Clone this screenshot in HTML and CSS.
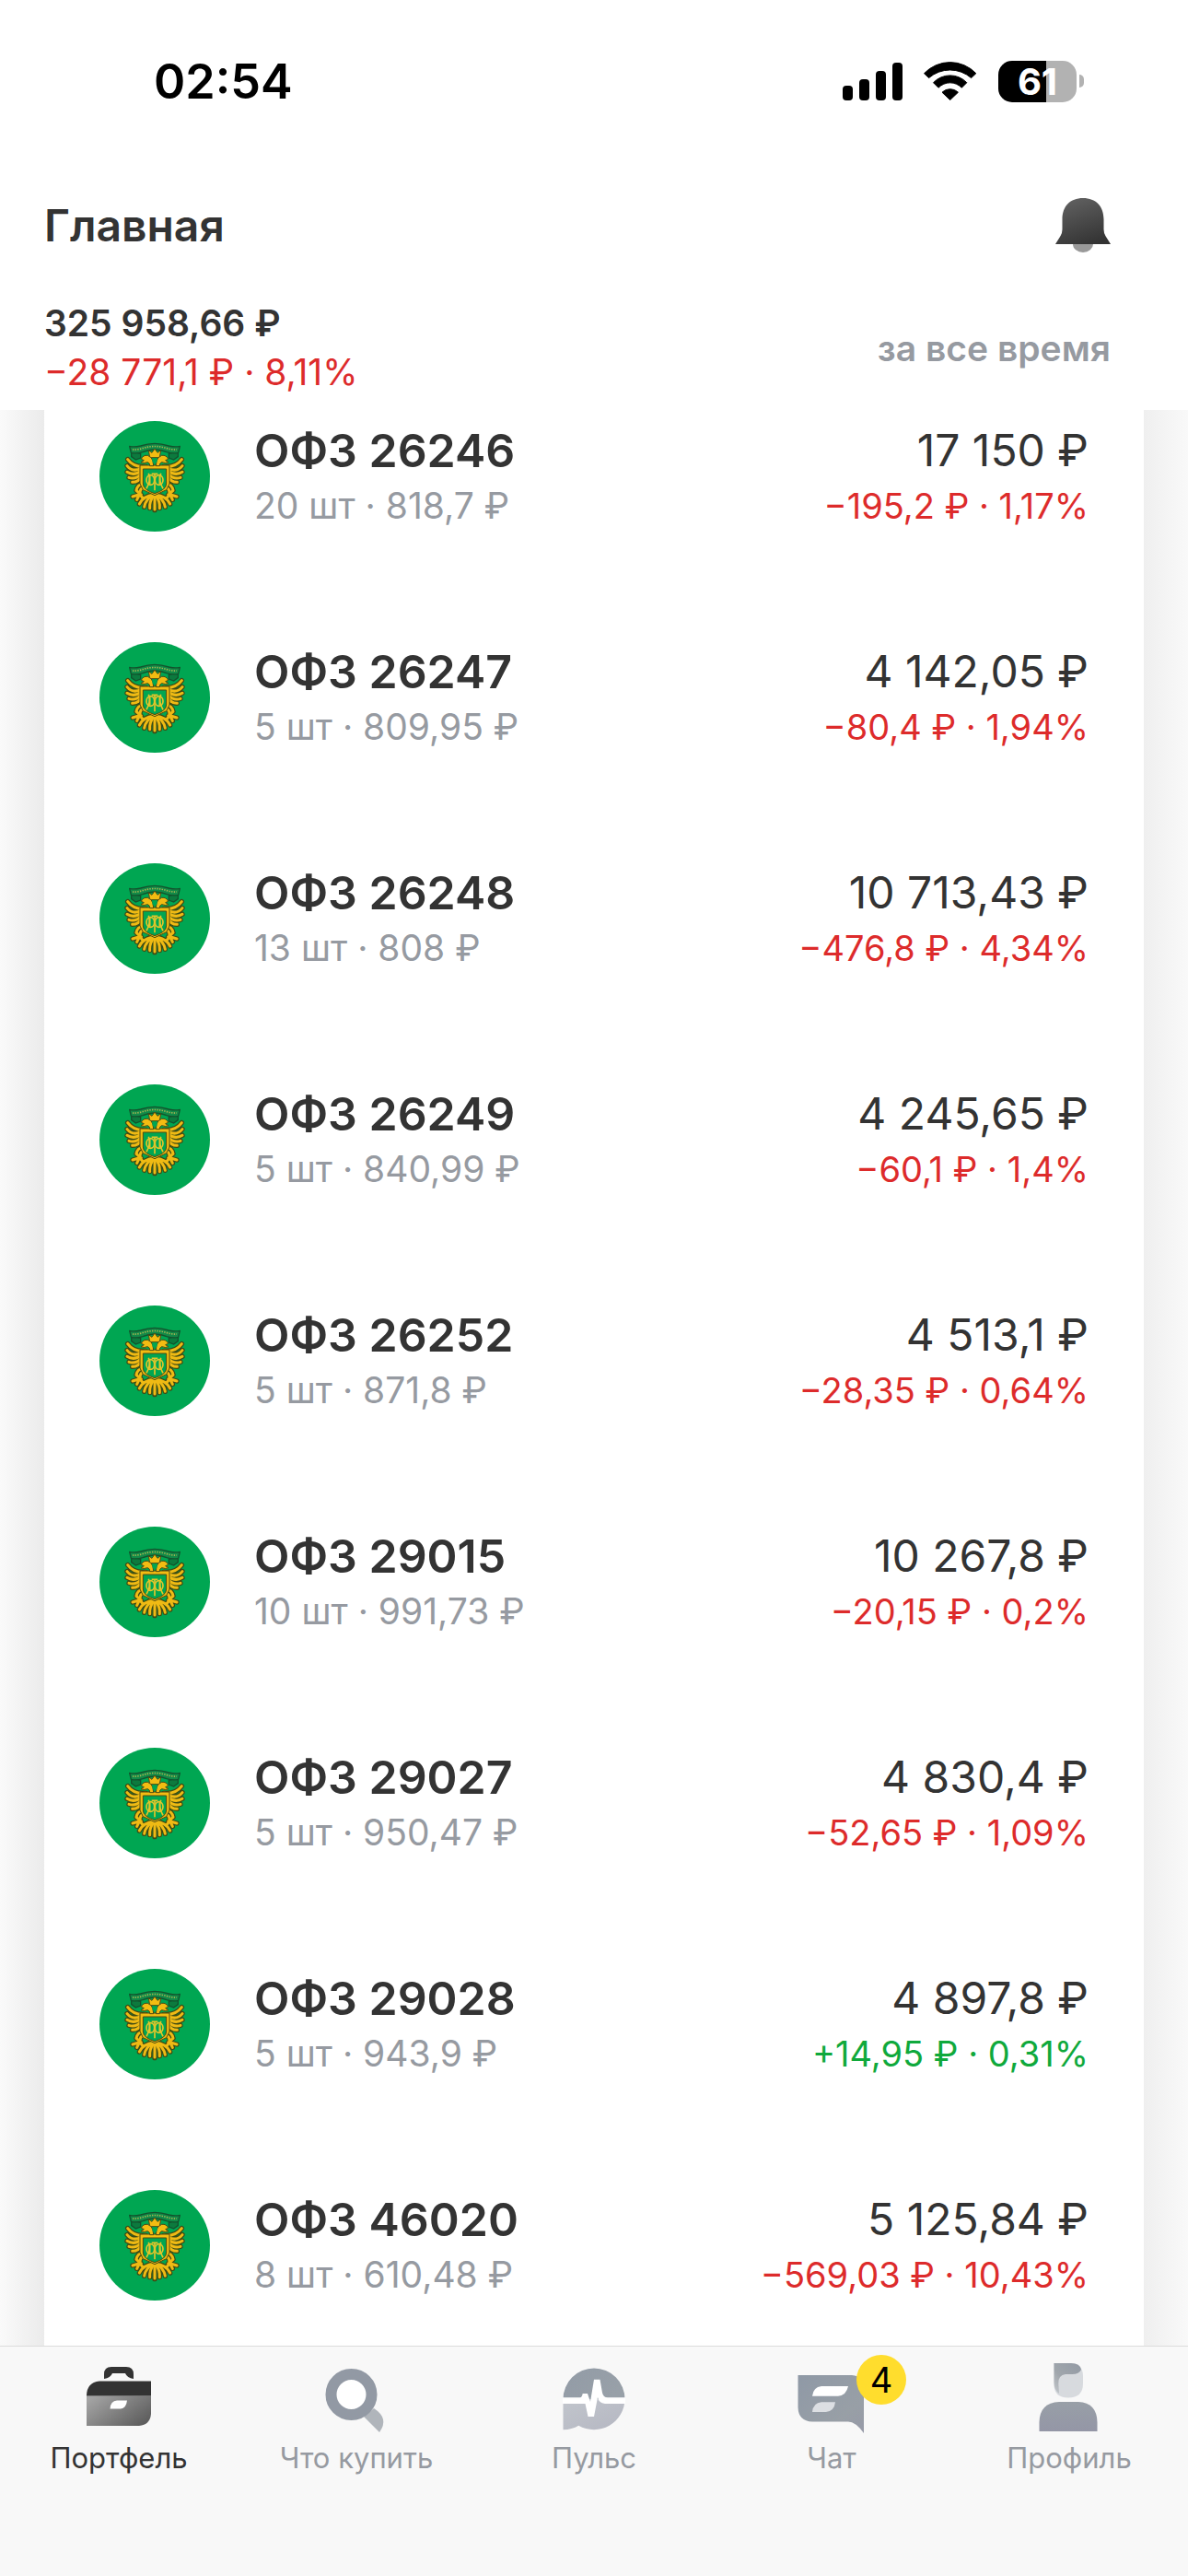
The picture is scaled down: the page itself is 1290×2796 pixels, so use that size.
FILE: index.html
```html
<!DOCTYPE html>
<html lang="ru">
<head>
<meta charset="utf-8">
<meta name="viewport" content="width=device-width, initial-scale=1">
<title>Портфель</title>
<link rel="stylesheet" href="styles.css">
</head>
<body>
<svg class="defs" width="0" height="0" aria-hidden="true">
  <defs>
    <path id="wing" d="M150 148Q112 152 92 125M136 154Q108 168 90 146M138 162Q112 180 90 166M138 170Q118 192 96 184M140 178Q126 200 107 199"/>
    <path id="leg" d="M140 206Q124 206 120 226M142 218Q132 218 132 236M120 226L136 240M128 240L108 246M130 240L122 256M132 240L142 252"/>
    <path id="tail" d="M178 240Q142 244 130 270M178 240Q150 254 146 280M178 242Q162 260 164 284"/>
    <g id="half-eagle">
      <use href="#wing"/><use href="#leg"/><use href="#tail"/>
    </g>
  </defs>
  <symbol id="emblem" viewBox="0 0 360 360">
    <circle cx="180" cy="180" r="180" fill="#00a652"/>
    <path d="M104 98v18l14 10 16-6v-14zM256 98v18l-14 10-16-6v-14z" fill="#0c7a3e" stroke="#12532d" stroke-width="4"/>
    <path d="M98 82q14 4 36-1 24-8 46-8t46 8q22 5 36 1l-5 21q-18 4-38-2-18-8-39-8t-39 8q-20 6-38 2z" fill="#128a48" stroke="#12532d" stroke-width="4" stroke-linejoin="round"/>
    <path d="M108 93q16 1 32-4 40-13 80 0 16 5 32 4" fill="none" stroke="#a9b552" stroke-width="5" stroke-dasharray="4 4"/>
    <g fill="none" stroke-linecap="round">
      <g stroke="#3d4a14" stroke-width="16">
        <use href="#half-eagle"/><use href="#half-eagle" transform="matrix(-1 0 0 1 360 0)"/><path d="M180 242V290"/>
      </g>
      <g stroke="#efba14" stroke-width="9">
        <use href="#half-eagle"/><use href="#half-eagle" transform="matrix(-1 0 0 1 360 0)"/><path d="M180 242V288"/>
      </g>
    </g>
    <g fill="#f3bc12" stroke="#4d4b12" stroke-width="3" stroke-linejoin="round">
      <path d="M132 144h96v60l-10 20-38 18-38-18-10-20z"/>
      <path d="M164 119l-4-24 11 8 9-13 9 13 11-8-4 24z"/>
      <path d="M164 146q2-8-7-12-12 5-22 0l10-6-9-4q6-14 21-12 14 5 17 18l2 16zM196 146q-2-8 7-12 12 5 22 0l-10-6 9-4q-6-14-21-12-14 5-17 18l-2 16z"/>
    </g>
    <path d="M172 122h16v10l-8 10-8-10z" fill="#00a652"/>
    <path d="M142 156h76v48q0 20-38 32-38-12-38-32z" fill="#00a652" stroke="#4d4b12" stroke-width="3"/>
    <g fill="none" stroke="#e3c52a" stroke-width="5">
      <ellipse cx="166" cy="192" rx="13" ry="16"/><ellipse cx="194" cy="192" rx="13" ry="16"/>
      <path d="M180 170v56M160 170q8 24-7 50M200 170q-8 24 7 50M164 178v28M196 178v28M170 172h20"/>
    </g>
  </symbol>
</svg>

<div class="app">
  <header class="header">
    <div class="status">
      <span class="status-time">02:54</span>
      <div class="status-icons">
        <svg width="65" height="41" viewBox="0 0 65 41" aria-hidden="true">
          <rect y="25" width="11" height="16" rx="4"/><rect x="18" y="18" width="11" height="23" rx="4"/><rect x="36" y="9" width="11" height="32" rx="4"/><rect x="54" width="11" height="41" rx="4"/>
        </svg>
        <svg width="58" height="42" viewBox="0 0 58 42" aria-hidden="true">
          <g stroke="#000" stroke-width="1" stroke-linejoin="round">
            <path d="M.5 12.7A38.8 38.8 0 0 1 56.8 12.7L51.6 17.6A35 35 0 0 0 5.6 17.6Z"/>
            <path d="M10.5 22.7A25 25 0 0 1 46.8 22.7L41.3 28.2A17.6 17.6 0 0 0 16 28.2Z"/>
            <path d="M20 33.2A12.5 12.5 0 0 1 37.4 33.2L28.7 41.5Z"/>
          </g>
        </svg>
        <div class="battery">
          <span class="battery-body">61</span>
          <span class="battery-nub"></span>
        </div>
      </div>
    </div>
    <div class="title-row">
      <h1 class="title">Главная</h1>
      <button class="bell" type="button" aria-label="Уведомления">
        <svg width="60" height="60" viewBox="0 0 60 60" aria-hidden="true">
          <defs><linearGradient id="bell-fill" x1=".3" y1="0" x2=".7" y2="1"><stop offset="0" stop-color="#606060"/><stop offset="1" stop-color="#333"/></linearGradient></defs>
          <path d="M19 50h22v1a11 9 0 0 1-22 0z" fill="#999"/>
          <path d="M0 51L5 43Q7.500 39 7.500 35V24C7.500 10 16 1 30 1S52.500 10 52.500 24V35Q52.500 39 55 43L60 51Z" fill="url(#bell-fill)"/>
        </svg>
      </button>
    </div>
    <div class="summary">
      <div>
        <div class="total">325 958,66 ₽</div>
        <div class="total-change">−28 771,1 ₽ · 8,11%</div>
      </div>
      <button class="period" type="button">за все время</button>
    </div>
  </header>

  <main class="content">
    <ul class="list">
      <li><a class="row" href="#26246"><svg class="logo" aria-hidden="true"><use href="#emblem"/></svg><span class="cell"><span class="name">ОФЗ 26246</span><span class="lot">20 шт · 818,7 ₽</span></span><span class="cell cell-end"><span class="value">17 150 ₽</span><span class="change">−195,2 ₽ · 1,17%</span></span></a></li>
      <li><a class="row" href="#26247"><svg class="logo" aria-hidden="true"><use href="#emblem"/></svg><span class="cell"><span class="name">ОФЗ 26247</span><span class="lot">5 шт · 809,95 ₽</span></span><span class="cell cell-end"><span class="value">4 142,05 ₽</span><span class="change">−80,4 ₽ · 1,94%</span></span></a></li>
      <li><a class="row" href="#26248"><svg class="logo" aria-hidden="true"><use href="#emblem"/></svg><span class="cell"><span class="name">ОФЗ 26248</span><span class="lot">13 шт · 808 ₽</span></span><span class="cell cell-end"><span class="value">10 713,43 ₽</span><span class="change">−476,8 ₽ · 4,34%</span></span></a></li>
      <li><a class="row" href="#26249"><svg class="logo" aria-hidden="true"><use href="#emblem"/></svg><span class="cell"><span class="name">ОФЗ 26249</span><span class="lot">5 шт · 840,99 ₽</span></span><span class="cell cell-end"><span class="value">4 245,65 ₽</span><span class="change">−60,1 ₽ · 1,4%</span></span></a></li>
      <li><a class="row" href="#26252"><svg class="logo" aria-hidden="true"><use href="#emblem"/></svg><span class="cell"><span class="name">ОФЗ 26252</span><span class="lot">5 шт · 871,8 ₽</span></span><span class="cell cell-end"><span class="value">4 513,1 ₽</span><span class="change">−28,35 ₽ · 0,64%</span></span></a></li>
      <li><a class="row" href="#29015"><svg class="logo" aria-hidden="true"><use href="#emblem"/></svg><span class="cell"><span class="name">ОФЗ 29015</span><span class="lot">10 шт · 991,73 ₽</span></span><span class="cell cell-end"><span class="value">10 267,8 ₽</span><span class="change">−20,15 ₽ · 0,2%</span></span></a></li>
      <li><a class="row" href="#29027"><svg class="logo" aria-hidden="true"><use href="#emblem"/></svg><span class="cell"><span class="name">ОФЗ 29027</span><span class="lot">5 шт · 950,47 ₽</span></span><span class="cell cell-end"><span class="value">4 830,4 ₽</span><span class="change">−52,65 ₽ · 1,09%</span></span></a></li>
      <li><a class="row" href="#29028"><svg class="logo" aria-hidden="true"><use href="#emblem"/></svg><span class="cell"><span class="name">ОФЗ 29028</span><span class="lot">5 шт · 943,9 ₽</span></span><span class="cell cell-end"><span class="value">4 897,8 ₽</span><span class="change change-up">+14,95 ₽ · 0,31%</span></span></a></li>
      <li><a class="row" href="#46020"><svg class="logo" aria-hidden="true"><use href="#emblem"/></svg><span class="cell"><span class="name">ОФЗ 46020</span><span class="lot">8 шт · 610,48 ₽</span></span><span class="cell cell-end"><span class="value">5 125,84 ₽</span><span class="change">−569,03 ₽ · 10,43%</span></span></a></li>
    </ul>
  </main>

  <nav class="tabs">
    <a class="tab tab-active" href="#portfolio">
      <svg class="tab-icon" viewBox="0 0 84 84" aria-hidden="true">
        <defs><linearGradient id="case-fill" x1="0" y1=".2" x2="1" y2=".8"><stop offset="0" stop-color="#a3a3a3"/><stop offset="1" stop-color="#5c5c5c"/></linearGradient></defs>
        <path d="M26 21V16Q26 8 34 8H50Q58 8 58 16V21Q51 20 49 15H35Q33 20 26 21Z" fill="#333"/>
        <path d="M7 39.500H77V59Q76 71 64 72H7Z" fill="url(#case-fill)"/>
        <path d="M7 39.500Q7 25 21 23.500H77V39.500Z" fill="#333"/>
        <path d="M32.500 53.500Q33 45 40 44.500H51Q50 53 44 53.500Z" fill="#fff"/>
      </svg>
      <span>Портфель</span>
    </a>
    <a class="tab" href="#buy">
      <svg class="tab-icon" viewBox="0 0 84 84" aria-hidden="true">
        <path d="M50 62L67 79Q78 64 61 53Z" fill="#b0b5bb"/>
        <circle cx="36.500" cy="38" r="22" fill="#fff" stroke="#9299a4" stroke-width="12"/>
      </svg>
      <span>Что купить</span>
    </a>
    <a class="tab" href="#pulse">
      <svg class="tab-icon" viewBox="0 0 84 84" aria-hidden="true">
        <defs>
          <linearGradient id="pulse-top" x1="0" y1="0" x2="1" y2=".5"><stop offset="0" stop-color="#929ba6"/><stop offset="1" stop-color="#98a0a8"/></linearGradient>
          <linearGradient id="pulse-low" x1="0" y1="0" x2="1" y2="1"><stop offset="0" stop-color="#c1c5cc"/><stop offset="1" stop-color="#b5b7c2"/></linearGradient>
        </defs>
        <path d="M8.500 43A33.500 33.500 0 0 1 75.500 43Z" fill="url(#pulse-top)"/>
        <path d="M8.500 43H75.500A33.500 33.500 0 0 1 25.300 71.700Q18 76 8.500 76.300Z" fill="url(#pulse-low)"/>
        <path d="M8 41.300H27Q29 41 29.700 37H35L38 46 42 21.700H48.500L51 36Q52 41.300 57 41.300H76V48H54Q47 47 46 41L42 62H35.500L32.500 48H8Z" fill="#fff"/>
      </svg>
      <span>Пульс</span>
    </a>
    <a class="tab" href="#chat">
      <span class="tab-badge-box">
        <svg class="tab-icon" viewBox="0 0 84 84" aria-hidden="true">
          <defs><linearGradient id="chat-fill" x1="0" y1="0" x2="1" y2="1"><stop offset="0" stop-color="#8f99a6"/><stop offset=".7" stop-color="#989fa6"/><stop offset="1" stop-color="#979aa8"/></linearGradient></defs>
          <path d="M5.500 17H64Q77 18 77 30V80Q68 67.500 60 67.500H21Q6 67 5.500 52Z" fill="url(#chat-fill)"/>
          <path d="M21 39.700Q22 30 31 29H60Q58 39 49 39.700Z" fill="#fff"/>
          <path d="M21 57Q22 47 31 46.300H46Q45 56 36 57Z" fill="#dcdfe3"/>
        </svg>
        <span class="badge">4</span>
      </span>
      <span>Чат</span>
    </a>
    <a class="tab" href="#profile">
      <svg class="tab-icon" viewBox="0 0 84 84" aria-hidden="true">
        <defs>
          <linearGradient id="hair" x1="1" y1="0" x2="0" y2="1"><stop offset="0" stop-color="#939aa4"/><stop offset=".6" stop-color="#a0a6ac"/><stop offset="1" stop-color="#c5c9cd"/></linearGradient>
          <linearGradient id="torso" x1="0" y1="0" x2="0" y2="1"><stop offset="0" stop-color="#989fa7"/><stop offset="1" stop-color="#9496a6"/></linearGradient>
        </defs>
        <path d="M25.500 4H44Q57 5 57 18V26Q57 41.500 41 41.500T25.500 26Z" fill="#d7dade"/>
        <path d="M25.500 4H44Q54 4 55 11 53 16 45 16H38Q30 17 30.300 26L31 37Q25.500 33 25.500 25Z" fill="url(#hair)"/>
        <path d="M9.500 78V68Q10 47 31 46H52Q72 47 72.500 68V78Z" fill="url(#torso)"/>
      </svg>
      <span>Профиль</span>
    </a>
  </nav>
</div>
</body>
</html>
```
FILE: styles.css
```css
* {
  box-sizing: border-box;
}

body {
  margin: 0;
  background: #fff;
  color: #333;
  font-family: Inter, "Liberation Sans", sans-serif;
  font-size: 39px;
}

a {
  color: inherit;
  text-decoration: none;
}

button {
  padding: 0;
  border: 0;
  background: none;
  font: inherit;
}

.defs {
  position: absolute;
}

.app {
  display: flex;
  flex-direction: column;
  min-height: 100vh;
}

.header {
  padding-bottom: 15px;
  background: #fff;
}

.status {
  display: flex;
  align-items: center;
  justify-content: space-between;
  height: 176px;
  padding: 0 113px 0 167px;
  color: #000;
}

.status-time {
  font-size: 52px;
  font-weight: 600;
}

.status-icons {
  display: flex;
  align-items: center;
  gap: 23px;
}

.battery {
  display: flex;
  align-items: center;
  gap: 3px;
}

.battery-body {
  width: 85px;
  border-radius: 15px;
  background: linear-gradient(to right, #000 61%, #b2b2b2 61%);
  color: #fff;
  font-size: 40px;
  font-weight: 700;
  line-height: 45px;
  text-align: center;
}

.battery-nub {
  width: 5px;
  height: 14px;
  border-radius: 0 5px 5px 0;
  background: #b2b2b2;
}

.title-row {
  display: flex;
  align-items: center;
  justify-content: space-between;
  height: 136px;
  padding: 0 84px 0 48px;
}

.title {
  margin: 0;
  font-size: 48px;
  font-weight: 600;
}

.bell svg {
  display: block;
}

.summary {
  display: flex;
  align-items: center;
  justify-content: space-between;
  padding: 12px 84px 0 48px;
  line-height: 53px;
}

.total {
  font-weight: 600;
}

.total-change,
.change {
  color: #dd2b2b;
}

.period {
  color: #969aa1;
  font-weight: 600;
}

.content {
  display: flex;
  flex: 1;
  padding: 0 48px;
  background: linear-gradient(to right, #fafafa, #ebebeb 48px, #fff 48px, #fff calc(100% - 48px), #efefef calc(100% - 48px), #f9f9f9);
}

.list {
  display: flex;
  flex: 1;
  flex-direction: column;
  gap: 118px;
  margin: 0;
  padding: 12px 60px 47px;
  background: #fff;
  list-style: none;
}

.row {
  display: flex;
  align-items: start;
  line-height: 60px;
}

.logo {
  width: 120px;
  height: 120px;
  margin-right: 48px;
}

.cell {
  display: flex;
  flex-direction: column;
  padding-top: 2px;
}

.cell-end {
  margin-left: auto;
  text-align: right;
}

.name {
  font-size: 50px;
  font-weight: 600;
}

.value {
  font-size: 48px;
}

.change {
  font-size: 38px;
}

.lot {
  color: #969aa1;
}

.change-up {
  color: #10a93c;
}

.tabs {
  display: grid;
  grid-template-columns: repeat(5, 1fr);
  height: 250px;
  padding-top: 14px;
  border-top: 1px solid #dcdcdc;
  background: #f8f8f8;
}

.tab {
  display: flex;
  flex-direction: column;
  align-items: center;
  gap: 5px;
  color: #969aa1;
  font-size: 31px;
  line-height: 36px;
}

.tab-active {
  color: #333;
}

.tab-icon {
  display: block;
  width: 84px;
  height: 84px;
}

.tab-badge-box {
  position: relative;
}

.badge {
  position: absolute;
  top: -5px;
  left: 69px;
  width: 54px;
  border-radius: 50%;
  background: #ffdd2d;
  color: #000;
  font-size: 38px;
  line-height: 54px;
  text-align: center;
}
```
